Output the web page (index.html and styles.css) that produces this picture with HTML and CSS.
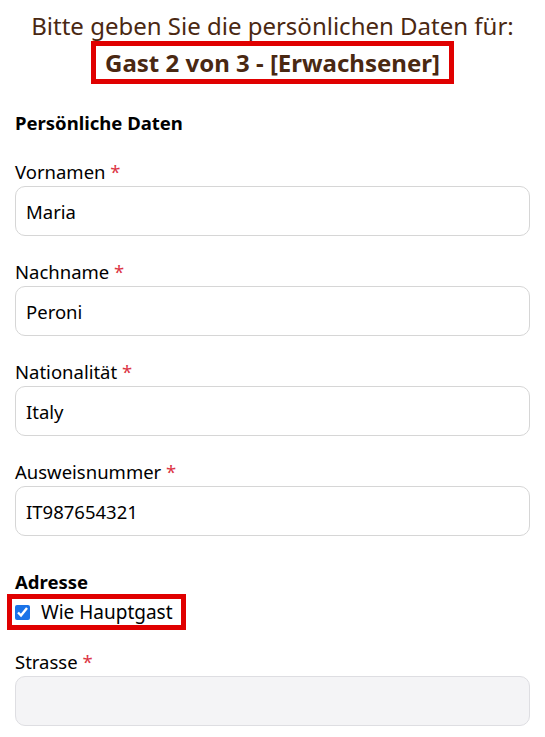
FILE: index.html
```html
<!DOCTYPE html>
<html lang="de">
<head>
<meta charset="utf-8">
<title>Gastdaten</title>
<link rel="stylesheet" href="styles.css">
</head>
<body>
<div class="page">
  <div class="header">
    <div class="header-line">Bitte geben Sie die persönlichen Daten für:</div>
    <div class="header-guest">Gast 2 von 3 - [Erwachsener]</div>
  </div>

  <h2 class="section-title first">Persönliche Daten</h2>

  <div class="field">
    <label class="field-label">Vornamen <span class="req">*</span></label>
    <input class="field-input" type="text" value="Maria">
  </div>
  <div class="field">
    <label class="field-label">Nachname <span class="req">*</span></label>
    <input class="field-input" type="text" value="Peroni">
  </div>
  <div class="field">
    <label class="field-label">Nationalität <span class="req">*</span></label>
    <input class="field-input" type="text" value="Italy">
  </div>
  <div class="field">
    <label class="field-label">Ausweisnummer <span class="req">*</span></label>
    <input class="field-input" type="text" value="IT987654321">
  </div>

  <h2 class="section-title address">Adresse</h2>
  <label class="check-row">
    <input class="check-box" type="checkbox" checked>
    <span class="check-text">Wie Hauptgast</span>
  </label>

  <div class="field">
    <label class="field-label">Strasse <span class="req">*</span></label>
    <input class="field-input" type="text" value="" disabled>
  </div>
</div>
</body>
</html>
```

FILE: styles.css
```css
* { box-sizing: border-box; }
html, body { margin: 0; padding: 0; background: #ffffff; }
body {
  font-family: "Noto Sans", "Open Sans", Arial, sans-serif;
  color: #000000;
}
.page {
  padding: 0 15px;
}
.header {
  text-align: center;
  color: #4a2812;
  font-size: 24px;
}
.header-line {
  padding-top: 10px;
  line-height: 31px;
}
.header-guest {
  display: inline-block;
  border: 5px solid #e00000;
  padding: 0 9px;
  line-height: 33px;
  font-weight: 700;
}
.section-title {
  margin: 0;
  font-size: 18.5px;
  font-weight: 700;
  line-height: 24px;
}
.section-title.first { margin-top: 27px; }
.section-title.address { margin-top: 34px; }
.field { margin-top: 25px; }
.field + .field { margin-top: 24px; }
.field-label {
  display: block;
  font-size: 18.5px;
  line-height: 24px;
  margin-bottom: 2px;
}
.req { color: #dc3545; }
.field-input {
  display: block;
  width: 100%;
  height: 50px;
  border: 1px solid #d6d6d6;
  border-radius: 10px;
  padding: 0 10px;
  font-family: inherit;
  font-size: 18.5px;
  color: #000000;
  background: #ffffff;
  outline: none;
}
.field-input:disabled { background: #f4f4f6; border-color: #dedee2; }
.check-row {
  display: inline-flex;
  align-items: center;
  gap: 11px;
  margin-left: -8px;
  border: 5px solid #e00000;
  padding: 1px 8px 1px 3px;
  height: 36px;
}
.check-box {
  margin: 0;
  width: 15px;
  height: 15px;
  accent-color: #1a73e8;
}
.check-text {
  font-size: 19px;
  line-height: 24px;
}
.check-row + .field { margin-top: 20px; }
```
